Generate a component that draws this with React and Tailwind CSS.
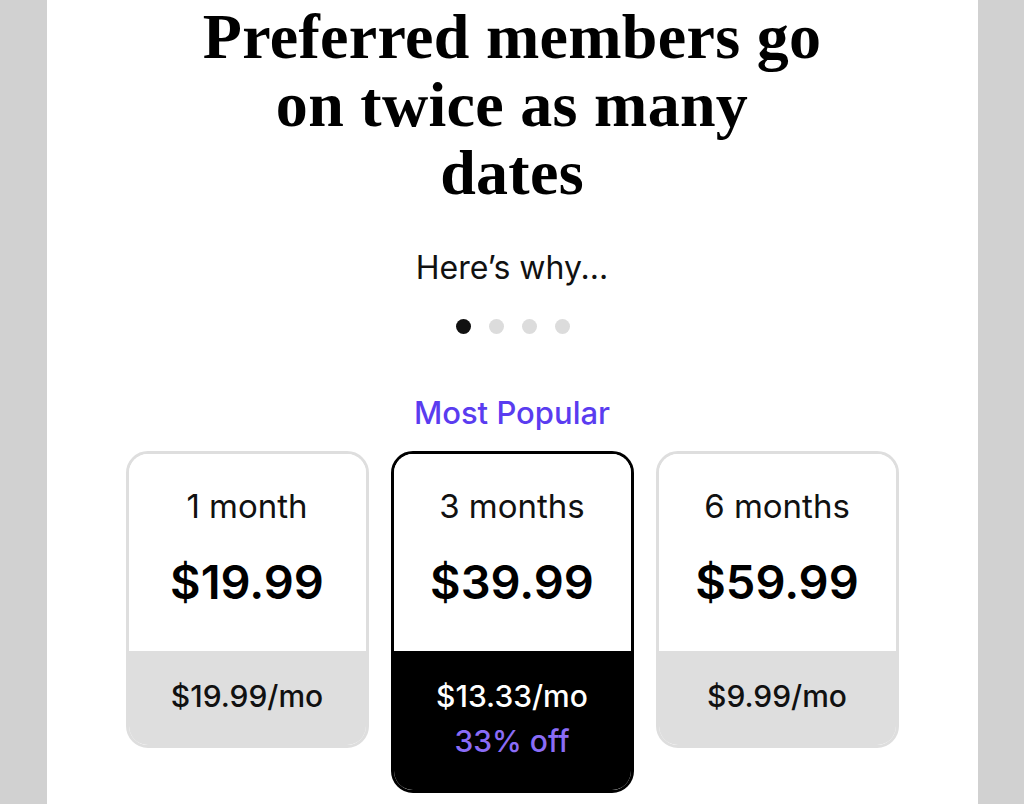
import React from 'react';

const plans = [
  { id: 1, label: '1 month', price: '$19.99', monthly: '$19.99/mo' },
  { id: 3, label: '3 months', price: '$39.99', monthly: '$13.33/mo', off: '33% off', selected: true },
  { id: 6, label: '6 months', price: '$59.99', monthly: '$9.99/mo' },
];

function PlanCard({ plan }) {
  const selected = plan.selected;
  return (
    <div
      className={`w-[243px] rounded-[22px] border-[3px] overflow-hidden flex flex-col ${
        selected ? 'border-black' : 'border-[#dedede]'
      }`}
    >
      <div className="h-[197px] bg-white flex flex-col items-center pt-[34px]">
        <div className="text-[33px] leading-[36px] text-[#111]">{plan.label}</div>
        <div className="mt-[32px] text-[47px] leading-[52px] font-semibold text-black">{plan.price}</div>
      </div>
      <div
        className={`flex flex-col items-center pt-[27px] ${
          selected ? 'bg-black h-[139px]' : 'bg-[#dedede] h-[94px]'
        }`}
      >
        <div className={`text-[30px] leading-[36px] font-medium ${selected ? 'text-white' : 'text-[#111]'}`}>
          {plan.monthly}
        </div>
        {plan.off && (
          <div className="mt-[9px] text-[30px] leading-[36px] font-medium text-[#8a6cf6]">{plan.off}</div>
        )}
      </div>
    </div>
  );
}

export default function App() {
  return (
    <div className="h-[804px] w-full bg-[#d1d1d1] flex justify-center overflow-hidden" style={{ fontFamily: 'Inter, "Noto Sans", sans-serif' }}>
      <div className="w-[931px] h-full bg-white flex flex-col items-center pt-[3px]">
        {/* Heading */}
        <h1
          className="text-center font-bold text-[64px] leading-[68px] text-black tracking-[0.3px]"
          style={{ fontFamily: '"Liberation Serif", "DejaVu Serif", serif' }}
        >
          Preferred members go
          <br />
          on twice as many
          <br />
          dates
        </h1>

        <p className="mt-[43px] text-[32px] leading-[36px] text-[#111]">Here’s why...</p>

        {/* Carousel dots */}
        <div className="mt-[33px] flex items-center gap-[18px] pl-[2px]">
          <span className="w-[15px] h-[15px] rounded-full bg-[#111]" />
          <span className="w-[15px] h-[15px] rounded-full bg-[#dcdcdc]" />
          <span className="w-[15px] h-[15px] rounded-full bg-[#dcdcdc]" />
          <span className="w-[15px] h-[15px] rounded-full bg-[#dcdcdc]" />
        </div>

        <div className="mt-[61px] text-[31px] leading-[36px] font-medium text-[#5a3cf0]">Most Popular</div>

        {/* Plans */}
        <div className="mt-[20px] flex items-start gap-[22px]">
          {plans.map((p) => (
            <PlanCard key={p.id} plan={p} />
          ))}
        </div>
      </div>
    </div>
  );
}
